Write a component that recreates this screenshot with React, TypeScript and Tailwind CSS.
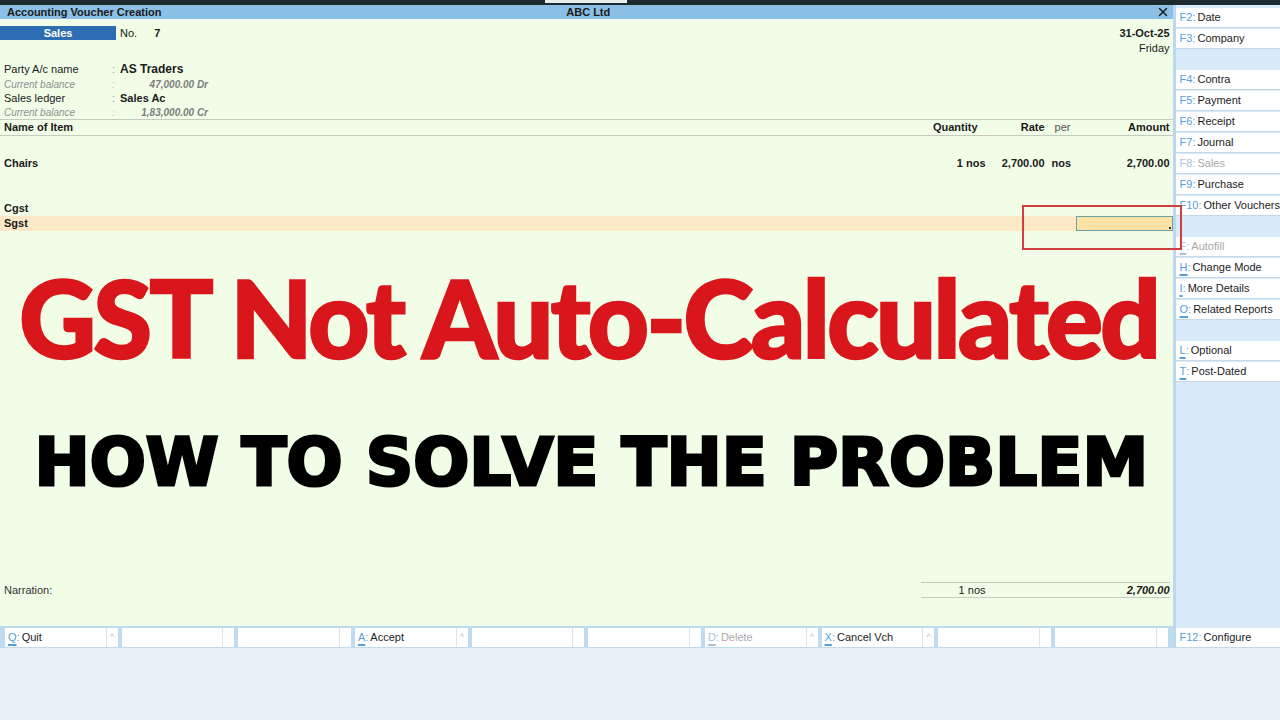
import React from 'react';
import { X } from 'lucide-react';

/**
 * A single hotkey button used in the right-hand panel and the bottom bar.
 */
interface ShortcutProps {
    hotkey: string;
    label: string;
    disabled?: boolean;
    underline?: boolean;
}

const Shortcut: React.FC<ShortcutProps> = ({ hotkey, label, disabled, underline }) => (
    <div className="h-[19px] bg-white flex items-center pl-[4px] text-[11px] whitespace-nowrap shadow-[0_1px_0_#c3d8e8]">
        <span className={`${disabled ? 'text-[#a9c4d8]' : 'text-[#56a0d8]'} ${underline ? 'underline decoration-[1.5px] underline-offset-[3px]' : ''}`}>
            {hotkey}
        </span>
        <span className={disabled ? 'text-[#a9c4d8]' : 'text-[#56a0d8]'}>:</span>
        <span className={`ml-[2px] ${disabled ? 'text-[#a8a8a8]' : 'text-[#1c1c1c]'}`}>{label}</span>
    </div>
);

// null entries are blank slots between groups
const sideItems: (ShortcutProps | null)[] = [
    { hotkey: 'F2', label: 'Date' },
    { hotkey: 'F3', label: 'Company' },
    null,
    { hotkey: 'F4', label: 'Contra' },
    { hotkey: 'F5', label: 'Payment' },
    { hotkey: 'F6', label: 'Receipt' },
    { hotkey: 'F7', label: 'Journal' },
    { hotkey: 'F8', label: 'Sales', disabled: true },
    { hotkey: 'F9', label: 'Purchase' },
    { hotkey: 'F10', label: 'Other Vouchers' },
    null,
    { hotkey: 'F', label: 'Autofill', disabled: true, underline: true },
    { hotkey: 'H', label: 'Change Mode', underline: true },
    { hotkey: 'I', label: 'More Details', underline: true },
    { hotkey: 'O', label: 'Related Reports', underline: true },
    null,
    { hotkey: 'L', label: 'Optional', underline: true },
    { hotkey: 'T', label: 'Post-Dated', underline: true },
];

interface BarButton {
    hotkey?: string;
    label?: string;
    disabled?: boolean;
    caret?: boolean;
}

const barButtons: BarButton[] = [
    { hotkey: 'Q', label: 'Quit', caret: true },
    {},
    {},
    { hotkey: 'A', label: 'Accept', caret: true },
    {},
    {},
    { hotkey: 'D', label: 'Delete', disabled: true, caret: true },
    { hotkey: 'X', label: 'Cancel Vch', caret: true },
    {},
    {},
];

const BottomButton: React.FC<BarButton> = ({ hotkey, label, disabled, caret }) => (
    <div className="h-[19px] bg-white flex text-[11px] whitespace-nowrap">
        <div className="flex-1 flex items-center pl-[3px]">
            {hotkey && (
                <>
                    <span className={`underline decoration-[1.5px] underline-offset-[3px] ${disabled ? 'text-[#a9c4d8]' : 'text-[#56a0d8]'}`}>{hotkey}</span>
                    <span className={disabled ? 'text-[#a9c4d8]' : 'text-[#56a0d8]'}>:</span>
                    <span className={`ml-[2px] ${disabled ? 'text-[#a8a8a8]' : 'text-[#1c1c1c]'}`}>{label}</span>
                </>
            )}
        </div>
        <div className="w-[12px] border-l border-[#dde3e6] flex items-center justify-center text-[9px] text-[#bcc2c6]">
            {caret ? '^' : ''}
        </div>
    </div>
);

const ItemRow: React.FC<{
    name: string;
    qty?: string;
    rate?: string;
    per?: string;
    amount?: string;
}> = ({ name, qty, rate, per, amount }) => (
    <div className="h-[15px] flex items-center font-bold text-[#1a1a1a] pr-[3px]">
        <div className="flex-1 pl-[4px]">{name}</div>
        <div className="w-[80px] text-right">{qty}</div>
        <div className="w-[61px] text-right pr-[2px]">{rate}</div>
        <div className="w-[43px] pl-[5px]">{per}</div>
        <div className="w-[80px] text-right">{amount}</div>
    </div>
);

export default function App() {
    return (
        <div className="w-[1280px] h-[720px] flex flex-col bg-[#e8f2fa] font-['Liberation_Sans',Arial,sans-serif] text-[11px] text-[#1a1a1a] overflow-hidden">
            {/* window strip */}
            <div className="h-[5px] bg-[#1d2b2f] pl-[545px]">
                <div className="w-[82px] h-[3px] bg-[#e9eef0]" />
            </div>

            <div className="h-[643px] flex">
                {/* voucher area */}
                <div className="w-[1173px] flex flex-col">
                    <div className="h-[14px] bg-[#8bbfe5] flex items-center font-bold">
                        <div className="flex-1 pl-[7px]">Accounting Voucher Creation</div>
                        <div>ABC Ltd</div>
                        <div className="flex-1 flex justify-end pr-[3px]">
                            <X size={14} strokeWidth={2.4} className="text-[#1a1a1a]" />
                        </div>
                    </div>

                    <div className="relative flex-1 flex flex-col bg-[#f1fde7]">
                        <div className="mt-[7px] flex justify-between pr-[3px]">
                            <div className="flex items-start">
                                <div className="w-[116px] h-[14px] bg-[#2e6db4] text-white font-bold flex items-center justify-center">
                                    Sales
                                </div>
                                <span className="ml-[4px] leading-[14px]">No.</span>
                                <span className="ml-[17px] leading-[14px] font-bold">7</span>
                            </div>
                            <div className="text-right leading-[15px]">
                                <div className="font-bold">31-Oct-25</div>
                                <div>Friday</div>
                            </div>
                        </div>

                        <div className="mt-[5px] pl-[4px]">
                            <div className="h-[16px] flex items-center">
                                <span className="w-[108px]">Party A/c name</span>
                                <span className="w-[8px] text-[#9a9a9a]">:</span>
                                <span className="font-bold text-[12px]">AS Traders</span>
                            </div>
                            <div className="h-[14px] flex items-center italic text-[#8f8f8f] text-[10px]">
                                <span className="w-[108px]">Current balance</span>
                                <span className="w-[8px] text-[#c4c4c4]">:</span>
                                <span className="w-[88px] text-right font-bold text-[#7d7d7d]">47,000.00 Dr</span>
                            </div>
                            <div className="h-[14px] flex items-center">
                                <span className="w-[108px]">Sales ledger</span>
                                <span className="w-[8px] text-[#9a9a9a]">:</span>
                                <span className="font-bold">Sales Ac</span>
                            </div>
                            <div className="h-[14px] flex items-center italic text-[#8f8f8f] text-[10px]">
                                <span className="w-[108px]">Current balance</span>
                                <span className="w-[8px] text-[#c4c4c4]">:</span>
                                <span className="w-[88px] text-right font-bold text-[#7d7d7d]">1,83,000.00 Cr</span>
                            </div>
                        </div>

                        {/* column headings */}
                        <div className="h-[17px] border-y border-[#c6cbbf] flex items-center font-bold pr-[3px]">
                            <div className="flex-1 pl-[4px]">Name of Item</div>
                            <div className="w-[80px] text-right pr-[8px]">Quantity</div>
                            <div className="w-[61px] text-right pr-[2px]">Rate</div>
                            <div className="w-[43px] pl-[8px] font-normal text-[#555]">per</div>
                            <div className="w-[80px] text-right">Amount</div>
                        </div>

                        <div className="mt-[20px]">
                            <ItemRow name="Chairs" qty="1 nos" rate="2,700.00" per="nos" amount="2,700.00" />
                        </div>
                        <div className="mt-[30px]">
                            <ItemRow name="Cgst" />
                        </div>
                        <div className="h-[15px] flex items-center justify-between bg-[#fde9c7] font-bold">
                            <span className="pl-[4px]">Sgst</span>
                            <div className="relative w-[97px] h-full border border-[#6e9fa6] bg-[#fde2a6]">
                                <div className="absolute right-[1px] bottom-[1px] w-[2px] h-[2px] bg-[#333]" />
                            </div>
                        </div>

                        {/* highlight around the empty amount */}
                        <div className="absolute z-10 left-[1022px] top-[186px] w-[160px] h-[45px] border-2 border-[#d23d3d]" />

                        <div className="mt-[31px] pl-[5px] text-center whitespace-nowrap font-['Lato',sans-serif] font-black text-[106px] leading-[110px] tracking-[-2.5px] text-[#d8161b] [-webkit-text-stroke:2.5px_#d8161b]">
                            GST Not Auto-Calculated
                        </div>
                        <div className="mt-[56px] pl-[10px] text-center whitespace-nowrap font-['DejaVu_Sans',sans-serif] font-bold text-[66px] leading-[70px] text-black [-webkit-text-stroke:3px_#000]">
                            HOW TO SOLVE THE PROBLEM
                        </div>

                        <div className="mt-auto mb-[28px] flex items-center pr-[3px]">
                            <div className="flex-1 pl-[4px] text-[#333]">Narration:</div>
                            <div className="w-[249px] h-[16px] border-y border-[#c6cbbf] flex items-center">
                                <div className="w-[65px] text-right">1 nos</div>
                                <div className="flex-1 text-right font-bold italic">2,700.00</div>
                            </div>
                        </div>
                    </div>

                    {/* bottom button bar */}
                    <div className="h-[22px] bg-[#bfdbef] grid grid-cols-10 gap-[4px] px-[5px] pt-[2px]">
                        {barButtons.map((b, i) => (
                            <BottomButton key={i} {...b} />
                        ))}
                    </div>
                </div>

                {/* right hotkey panel */}
                <div className="flex-1 flex flex-col bg-[#d9ebf9] border-l-[3px] border-[#bcd8ee] pt-[3px]">
                    <div className="flex flex-col gap-[2px]">
                        {sideItems.map((item, i) =>
                            item ? <Shortcut key={i} {...item} /> : <div key={i} className="h-[18px]" />
                        )}
                    </div>
                    <div className="mt-auto mb-[1px]">
                        <Shortcut hotkey="F12" label="Configure" />
                    </div>
                </div>
            </div>

            <div className="flex-1" />
        </div>
    );
}
